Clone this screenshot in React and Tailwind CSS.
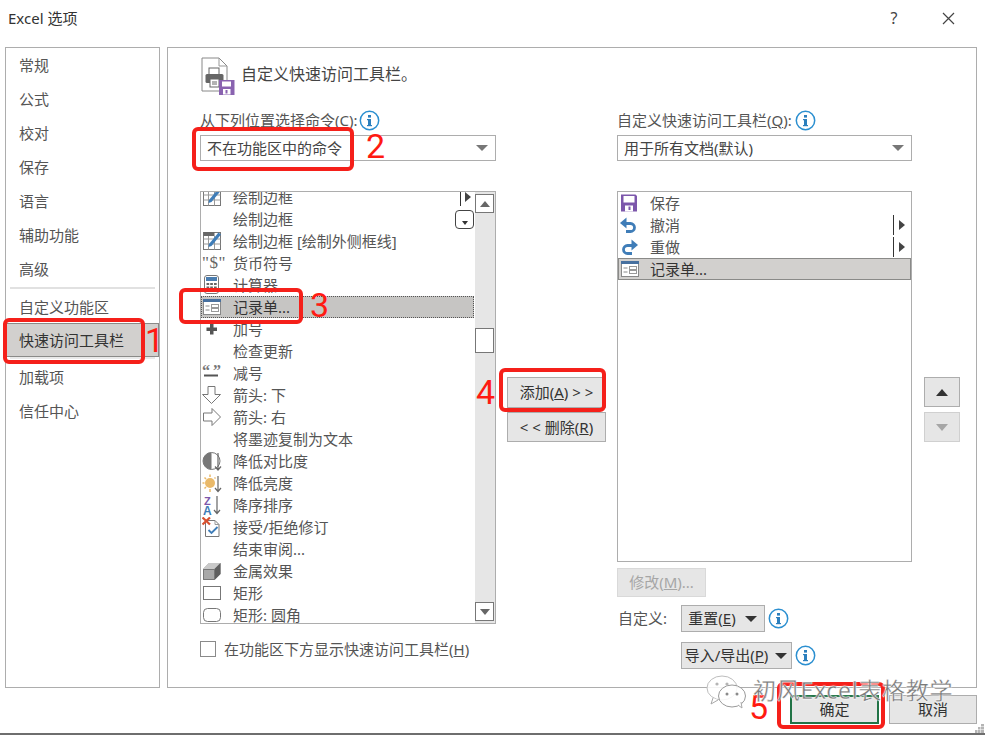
import React from "react";

const Tri = ({ dark }) => (
  <svg width="14" height="8" viewBox="0 0 14 8"><path d="M1 1h12L7 7z" fill={dark ? "#333" : "#777"} /></svg>
);

const Info = () => (
  <svg width="21" height="21" viewBox="0 0 21 21" className="shrink-0">
    <circle cx="10.5" cy="10.5" r="9.2" fill="#fff" stroke="#2b8fd0" strokeWidth="1.5" />
    <rect x="9" y="9" width="3" height="7" fill="#2b7fbd" />
    <rect x="9" y="5" width="3" height="2.6" fill="#2b7fbd" />
    <rect x="8" y="9" width="2" height="1.2" fill="#2b7fbd" />
    <rect x="8" y="15" width="5" height="1.2" fill="#2b7fbd" />
  </svg>
);

const S = ({ children, w = 21, h = 20 }) => (
  <svg width={w} height={h} viewBox={`0 0 ${w} ${h}`}>{children}</svg>
);

const TablePen = () => (
  <S>
    <rect x="1.500" y="1.500" width="17" height="17" fill="#fff" stroke="#777" />
    <rect x="1.500" y="1" width="11" height="4" fill="#666" />
    <path d="M1.500 8h17M1.500 13h17M6.500 5v13.500M12.500 5v13.500" stroke="#999" />
    <path d="M7 13 16.500 1.500l2.500 2-9.500 11.500-3 1z" fill="#3f7db8" />
  </S>
);
const FormIcon = () => (
  <S>
    <rect x="1.500" y="2.500" width="17" height="15" fill="#fff" stroke="#888" />
    <rect x="1" y="2" width="18" height="3" fill="#47709f" />
    <path d="M3.500 9h4M3.500 13h4" stroke="#888" />
    <rect x="9.500" y="7.500" width="7" height="3" fill="#fff" stroke="#999" />
    <rect x="9.500" y="11.500" width="7" height="3" fill="#fff" stroke="#999" />
  </S>
);
const Calc = () => (
  <S>
    <rect x="2.500" y="0.500" width="14" height="18" rx="2.500" fill="#fff" stroke="#777" />
    <rect x="4" y="2" width="11" height="4" fill="#4a7db0" />
    <path d="M4.500 8h2.700v2H4.500zM8.200 8h2.700v2H8.200zM12 8h2.700v2H12zM4.500 11.500h2.700v2H4.500zM8.200 11.500h2.700v2H8.200zM12 11.500h2.700v2H12zM4.500 15h2.700v2H4.500zM8.200 15h2.700v2H8.200zM12 15h2.700v2H12z" fill="#666" />
  </S>
);
const Dollar = () => (
  <span className="block w-[21px] text-center font-['Liberation_Serif',serif] text-[17px] leading-[20px] tracking-[0.5px] text-[#666]">"$"</span>
);
const Plus = () => (
  <S><path d="M8 5h3.500v3.500H15V12h-3.500v3.500H8V12H4.500V8.500H8z" fill="#555" /></S>
);
const Minus = () => (
  <S>
    <rect x="2" y="11.500" width="14" height="2" fill="#555" />
    <text x="0" y="13" fontFamily="Liberation Serif" fontWeight="700" fontSize="16" fill="#777">“</text>
    <text x="11" y="13" fontFamily="Liberation Serif" fontWeight="700" fontSize="16" fill="#777">”</text>
  </S>
);
const ArrowDown = () => (
  <S><path d="M6 1.500h7v8h5.500l-9 9-9-9H6z" fill="#fff" stroke="#777" /></S>
);
const ArrowRight = () => (
  <S><path d="M1.500 6h8.500V1.500l8.500 8.500-8.500 8.500V14H1.500z" fill="#fff" stroke="#777" /></S>
);
const Contrast = () => (
  <S>
    <circle cx="9.500" cy="10" r="8.500" fill="#fff" stroke="#777" />
    <path d="M9.500 1.500a8.500 8.500 0 0 0 0 17z" fill="#777" />
    <path d="M16 2v17M13 15.500l3 3.500 3-3.500" fill="none" stroke="#666" strokeWidth="1.200" />
  </S>
);
const Sun = () => (
  <S>
    <circle cx="8" cy="10" r="5" fill="#e9b96a" />
    <path d="M8 1.500v2.500M8 16v3M.5 10H2.500M2.500 4.500l1.500 1.500M2.500 15.500 4 14M12.500 5.500l1-1" stroke="#e9b96a" strokeWidth="1.500" />
    <path d="M16 3v15.500M13 15l3 3.500 3-3.500" fill="none" stroke="#666" strokeWidth="1.200" />
  </S>
);
const SortZA = () => (
  <S>
    <text x="2" y="9.500" fontFamily="Liberation Sans" fontWeight="700" fontSize="11" fill="#7c57ab">Z</text>
    <text x="1" y="20" fontFamily="Liberation Sans" fontWeight="700" fontSize="12" fill="#3f7db8">A</text>
    <path d="M15 1v17.500M12 15l3 3.500 3-3.500" fill="none" stroke="#666" strokeWidth="1.200" />
  </S>
);
const Accept = () => (
  <S>
    <path d="M3.500 3.500h9.500l4 4v12H3.500z" fill="#fff" stroke="#777" />
    <path d="M13 3.500v4h4" fill="none" stroke="#999" />
    <path d="M6.500 13l3 3 6-6" fill="none" stroke="#3f7db8" strokeWidth="1.800" />
    <path d="M.5 .5 8 7.500M8 .5 .5 7.500" stroke="#d8502e" strokeWidth="2.200" />
  </S>
);
const Cube = () => (
  <S>
    <path d="M1 8l6-6h11.500v11l-6 6H1z" fill="#8a8a8a" />
    <path d="M1 8l6-6h11.500l-6 6z" fill="#c9c9c9" />
    <path d="M12.500 8l6-6v11l-6 6z" fill="#5f5f5f" />
    <path d="M1.500 8.500h11v10h-11z" fill="#a8a8a8" stroke="#777" />
  </S>
);
const Rect = () => <S><rect x="1.500" y="3.500" width="17" height="13" fill="#fff" stroke="#777" /></S>;
const RoundRect = () => <S><rect x="1.500" y="3.500" width="17" height="13" rx="4" fill="#fff" stroke="#777" /></S>;
const SaveIcon = () => (
  <S>
    <path d="M2 1.500h14.500L18 3v15.500H2z" fill="#7c57ab" />
    <rect x="4.500" y="3" width="11" height="6.500" fill="#fff" />
    <rect x="6" y="12.500" width="8" height="6" fill="#fff" />
    <rect x="9.500" y="13.500" width="2" height="3.500" fill="#7c57ab" />
  </S>
);
const Undo = () => (
  <S>
    <path d="M6 8.500H11.500a4 4 0 0 1 0 8H7" fill="none" stroke="#3f7db8" strokeWidth="2.800" />
    <path d="M1 8l6.500-5.500v11z" fill="#3f7db8" />
  </S>
);
const Redo = () => (
  <S>
    <path d="M14 8.500H8.500a4 4 0 0 0 0 8H13" fill="none" stroke="#3f7db8" strokeWidth="2.800" />
    <path d="M19 8l-6.500-5.500v11z" fill="#3f7db8" />
  </S>
);

const leftItems = [
  [TablePen, "绘制边框", "line"],
  [null, "绘制边框", "drop"],
  [TablePen, "绘制边框 [绘制外侧框线]"],
  [Dollar, "货币符号"],
  [Calc, "计算器"],
  [FormIcon, "记录单...", "sel"],
  [Plus, "加号"],
  [null, "检查更新"],
  [Minus, "减号"],
  [ArrowDown, "箭头: 下"],
  [ArrowRight, "箭头: 右"],
  [null, "将墨迹复制为文本"],
  [Contrast, "降低对比度"],
  [Sun, "降低亮度"],
  [SortZA, "降序排序"],
  [Accept, "接受/拒绝修订"],
  [null, "结束审阅..."],
  [Cube, "金属效果"],
  [Rect, "矩形"],
  [RoundRect, "矩形: 圆角"],
];

const ListRow = ({ Icon, label, kind }) => {
  const sel = kind === "sel";
  return (
    <div className={`relative flex h-[22px] shrink-0 items-center ${sel ? "mr-px bg-[#c6c5c3] outline-1 -outline-offset-1 outline-dotted outline-[#555]" : ""}`}>
      <div className="flex w-[32px] shrink-0 pl-px">{Icon && <Icon />}</div>
      <span className={sel ? "text-[#333]" : ""}>{label}</span>
      {kind === "line" && (
        <div className="ml-auto mr-[4px] flex h-[22px] items-center gap-[4px]">
          <div className="h-[18px] w-px bg-[#333]" />
          <svg width="6" height="10" viewBox="0 0 6 10"><path d="M0 0l6 5-6 5z" fill="#444" /></svg>
        </div>
      )}
      {kind === "drop" && (
        <div className="ml-auto mr-px flex h-[19px] w-[19px] items-end justify-center rounded-[4px] border border-[#444] pb-[3px]">
          <svg width="6" height="4" viewBox="0 0 6 4"><path d="M0 0h6L3 4z" fill="#333" /></svg>
        </div>
      )}
    </div>
  );
};

const RightRow = ({ Icon, label, arrow, sel }) => (
  <div className={`flex h-[22px] shrink-0 items-center ${sel ? "border border-[#8a8a88] bg-[#d2d0ce] text-[#333]" : ""}`}>
    <div className={`flex shrink-0 pl-px ${sel ? "w-[31px]" : "w-[32px]"}`}>
      <Icon />
    </div>
    <span>{label}</span>
    {arrow && (
      <div className="ml-auto mr-[6px] flex h-[20px] items-center gap-[5px]">
        <div className="h-[20px] w-px bg-[#333]" />
        <svg width="6" height="10" viewBox="0 0 6 10"><path d="M0 0l6 5-6 5z" fill="#444" /></svg>
      </div>
    )}
  </div>
);

const Btn = ({ className = "", children }) => (
  <div className={`flex items-center justify-center border border-[#adadad] bg-[#e6e6e6] text-[#333] ${className}`}>{children}</div>
);

const Select = ({ children }) => (
  <div className="mt-[5px] flex h-[26px] items-center justify-between border border-[#adadad] pl-[6px] pr-[6px] text-[#444]">
    <span>{children}</span>
    <Tri />
  </div>
);

const Red = ({ className }) => <div className={`absolute rounded-[6px] border-[4px] border-[#f5201a] ${className}`} />;
const Num = ({ className, children }) => (
  <span className={`absolute font-['Roboto',sans-serif] text-[34px] font-normal leading-none text-[#ff1a12] ${className}`}>{children}</span>
);

const side1 = ["常规", "公式", "校对", "保存", "语言", "辅助功能", "高级"];

export default function App() {
  return (
    <div className="relative h-[735px] w-[985px] overflow-hidden border-b-2 border-[#6e6e6e] bg-white font-['Noto_Sans','Noto_Sans_CJK_SC',sans-serif] text-[15px] text-[#555]">
      <div className="flex h-[47px] items-start pl-[8px] pt-[6px] text-[#333]">
        <span className="leading-[24px]">Excel 选项</span>
        <span className="ml-[813px] text-[16px] leading-[24px] text-[#444]">?</span>
        <svg className="ml-[45px] mt-[6px]" width="13" height="13" viewBox="0 0 13 13"><path d="M1 1l11 11M12 1 1 12" stroke="#444" strokeWidth="1.200" /></svg>
      </div>

      <div className="flex h-[641px] pl-[5px]">
        <div className="flex w-[155px] flex-col border border-[#adadad] leading-[34px]">
          {side1.map((t) => (
            <div key={t} className="h-[34px] shrink-0 pl-[13px]">{t}</div>
          ))}
          <div className="mx-[4px] my-[1px] h-[2px] shrink-0 bg-[#e1e1e1]" />
          <div className="h-[33px] shrink-0 pl-[13px]">自定义功能区</div>
          <div className="h-[34px] shrink-0 border border-[#8a8a88] bg-[#d2d0ce] pl-[12px] leading-[32px] text-[#333]">快速访问工具栏</div>
          <div className="mx-[4px] mb-px h-[2px] shrink-0 bg-[#e9e9e9]" />
          <div className="h-[34px] shrink-0 pl-[13px]">加载项</div>
          <div className="h-[34px] shrink-0 pl-[13px]">信任中心</div>
        </div>

        <div className="ml-[7px] w-[810px] border border-[#adadad] pl-[32px]">
          <div className="flex h-[62px] items-start pl-px pt-[9px]">
            <svg width="34" height="38" viewBox="0 0 34 38">
              <path d="M1 1h17l8 8v25H1z" fill="#fff" stroke="#888" />
              <path d="M18 1v8h8" fill="none" stroke="#999" />
              <rect x="8" y="11" width="10" height="7" fill="#fff" stroke="#666" />
              <rect x="4.500" y="17" width="18" height="9" rx="1.500" fill="#666" />
              <rect x="9" y="22" width="9" height="8" fill="#fff" stroke="#666" />
              <path d="M11 25h5M11 27h5" stroke="#666" />
              <path d="M18 23h15.500v15H18z" fill="#8a63b0" />
              <rect x="21" y="24.500" width="9" height="5" fill="#fff" />
              <rect x="22" y="32" width="7.500" height="5.500" fill="#fff" />
              <rect x="24.500" y="33" width="2" height="3.500" fill="#8a63b0" />
            </svg>
            <span className="ml-[6px] mt-[5px] text-[16px] leading-[24px] text-[#444]">自定义快速访问工具栏。</span>
          </div>

          <div className="flex">
            <div className="w-[296px] shrink-0">
              <div className="flex h-[20px] items-center gap-[1px]">
                <span>从下列位置选择命令(C):</span>
                <Info />
              </div>
              <Select>不在功能区中的命令</Select>
              <div className="mt-[30px] flex h-[433px] overflow-hidden border border-[#adadad]">
                <div className="-mt-[6px] flex min-w-0 flex-1 flex-col">
                  {leftItems.map(([Icon, label, kind], i) => (
                    <ListRow key={i} Icon={Icon} label={label} kind={kind} />
                  ))}
                </div>
                <div className="flex w-[20px] shrink-0 flex-col bg-[#e6e6e6] pt-[2px] pb-[2px]">
                  <div className="flex h-[19px] w-[19px] items-center justify-center border border-[#777] bg-white">
                    <svg width="10" height="6" viewBox="0 0 10 6"><path d="M0 6l5-6 5 6z" fill="#666" /></svg>
                  </div>
                  <div className="mt-[115px] h-[25px] w-[19px] border border-[#777] bg-white" />
                  <div className="mt-auto flex h-[19px] w-[19px] items-center justify-center border border-[#777] bg-white">
                    <svg width="10" height="6" viewBox="0 0 10 6"><path d="M0 0l5 6 5-6z" fill="#666" /></svg>
                  </div>
                </div>
              </div>
              <div className="mt-[17px] flex h-[16px] items-center">
                <div className="h-[16px] w-[16px] border border-[#8a8a8a]" />
                <span className="ml-[8px] text-[#555]">在功能区下方显示快速访问工具栏(<u>H</u>)</span>
              </div>
            </div>

            <div className="w-[121px] shrink-0 pl-[11px] pr-[11px] pt-[267px]">
              <Btn className="h-[31px] w-[99px]">添加(<u>A</u>)&nbsp;&gt; &gt;</Btn>
              <Btn className="mt-[4px] h-[30px] w-[99px]">&lt; &lt;&nbsp;删除(<u>R</u>)</Btn>
            </div>

            <div className="w-[295px] shrink-0">
              <div className="flex h-[20px] items-center gap-[3px]">
                <span>自定义快速访问工具栏(<u>Q</u>):</span>
                <Info />
              </div>
              <Select>用于所有文档(默认)</Select>
              <div className="mt-[30px] flex h-[371px] flex-col border border-[#adadad]">
                <RightRow Icon={SaveIcon} label="保存" />
                <RightRow Icon={Undo} label="撤消" arrow />
                <RightRow Icon={Redo} label="重做" arrow />
                <RightRow Icon={FormIcon} label="记录单..." sel />
              </div>
              <div className="mt-[6px] flex h-[29px] w-[89px] items-center justify-center border border-[#d9d9d9] bg-[#e6e6e6] text-[#a6a6a6]">修改(<u>M</u>)...</div>
              <div className="mt-[8px] flex items-center">
                <span className="w-[64px] pl-px">自定义:</span>
                <Btn className="h-[27px] w-[84px] gap-[8px]"><span>重置(<u>E</u>)</span><Tri dark /></Btn>
                <span className="ml-[3px]"><Info /></span>
              </div>
              <div className="mt-[10px] flex items-center pl-[64px]">
                <Btn className="h-[27px] w-[111px] gap-[6px]"><span>导入/导出(<u>P</u>)</span><Tri dark /></Btn>
                <span className="ml-[3px]"><Info /></span>
              </div>
            </div>

            <div className="ml-[12px] flex flex-col pt-[267px]">
              <Btn className="h-[30px] w-[36px]">
                <svg width="12" height="7" viewBox="0 0 12 7"><path d="M0 7l6-7 6 7z" fill="#333" /></svg>
              </Btn>
              <Btn className="mt-[5px] h-[30px] w-[36px] border-[#d0d0d0]">
                <svg width="12" height="7" viewBox="0 0 12 7"><path d="M0 0l6 7 6-7z" fill="#a6a6a6" /></svg>
              </Btn>
            </div>
          </div>
        </div>
      </div>

      <div className="flex justify-end gap-[10px] pr-[8px] pt-[7px]">
        <div className="flex h-[29px] w-[89px] items-center justify-center border-2 border-[#217346] bg-[#e6e6e6] text-[#333]">确定</div>
        <Btn className="h-[29px] w-[88px]">取消</Btn>
      </div>

      <svg className="absolute bottom-0 right-[1px]" width="9" height="9" viewBox="0 0 9 9">
        <path d="M6 0h3v2.500H6zM3 3h2.500v2.500H3zM6 3h3v2.500H6zM0 6h2.500v3H0zM3 6h2.500v3H3zM6 6h3v3H6z" fill="#b5b5b5" />
      </svg>

      <Red className="left-[3px] top-[318px] h-[46px] w-[142px]" />
      <Red className="left-[192px] top-[127px] h-[44px] w-[162px]" />
      <Red className="left-[179px] top-[288px] h-[36px] w-[124px]" />
      <Red className="left-[499px] top-[368px] h-[44px] w-[107px]" />
      <Red className="left-[777px] top-[682px] h-[47px] w-[108px]" />
      <Num className="left-[145px] top-[323px]">1</Num>
      <Num className="left-[366px] top-[129px]">2</Num>
      <Num className="left-[310px] top-[288px]">3</Num>
      <Num className="left-[476px] top-[375px]">4</Num>
      <Num className="left-[749px] top-[690px]">5</Num>

      <svg className="absolute left-[705px] top-[675px]" width="42" height="34" viewBox="0 0 42 34">
        <ellipse cx="17" cy="13" rx="15" ry="12" fill="#fff" fillOpacity="0.85" stroke="#bdbdbd" />
        <ellipse cx="27" cy="21" rx="13.500" ry="11" fill="#fff" fillOpacity="0.85" stroke="#9a9a9a" />
        <path d="M8 23l-2 6 7-4M33 30l4 3-1-6" fill="#fff" stroke="#a8a8a8" />
        <circle cx="12" cy="9" r="1.600" fill="#b5b5b5" />
        <circle cx="22" cy="9" r="1.600" fill="#b5b5b5" />
        <circle cx="22" cy="19" r="1.500" fill="#8a8a8a" />
        <circle cx="32" cy="19" r="1.500" fill="#8a8a8a" />
      </svg>
      <span className="absolute left-[753px] top-[674px] whitespace-nowrap text-[23px] leading-[32px] tracking-[0.7px] text-[#7a7a7a] [-webkit-text-stroke:0.3px_#ffffff] [text-shadow:0_0_2px_#ffffff]">初风Excel表格教学</span>
    </div>
  );
}
